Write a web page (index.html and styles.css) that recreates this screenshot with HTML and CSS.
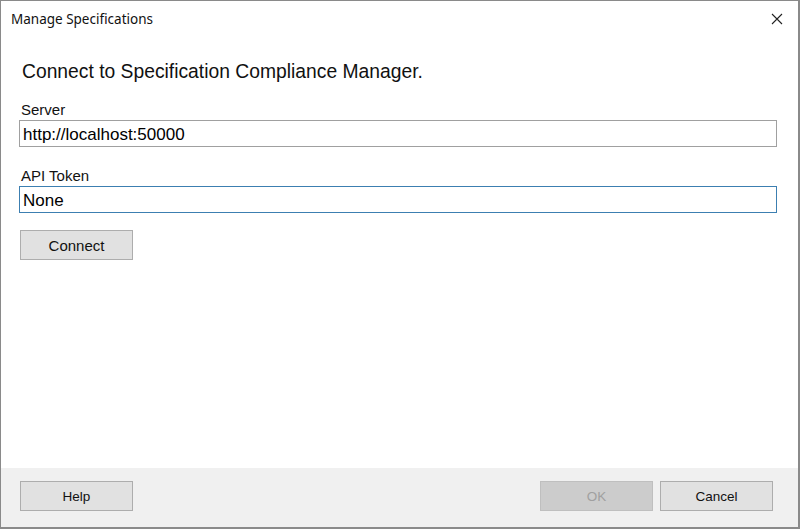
FILE: index.html
```html
<!DOCTYPE html>
<html>
<head>
<meta charset="utf-8">
<link rel="stylesheet" href="styles.css">
</head>
<body>
<div class="window">
  <div class="titlebar">
    <span class="title">Manage Specifications</span>
    <span class="close" aria-label="Close">
      <svg width="12" height="12" viewBox="0 0 12 12"><path d="M1 1L11 11M11 1L1 11" stroke="#222" stroke-width="1.1" fill="none"/></svg>
    </span>
  </div>
  <div class="content">
    <h1 class="heading">Connect to Specification Compliance Manager.</h1>
    <div class="field first">
      <label class="label">Server</label>
      <div class="input">http://localhost:50000</div>
    </div>
    <div class="field">
      <label class="label">API Token</label>
      <div class="input focused">None</div>
    </div>
    <button class="btn connect">Connect</button>
  </div>
  <div class="footer">
    <button class="btn">Help</button>
    <div class="spacer"></div>
    <button class="btn disabled">OK</button>
    <button class="btn">Cancel</button>
  </div>
</div>
</body>
</html>
```

FILE: styles.css
```css
html, body {
  margin: 0;
  padding: 0;
  background: #ffffff;
}
.window {
  width: 800px;
  height: 529px;
  box-sizing: border-box;
  border: 1px solid #8a8a8a;
  border-right-width: 2px;
  border-bottom-width: 2px;
  display: flex;
  flex-direction: column;
  background: #fff;
  font-family: "Liberation Sans", Arial, sans-serif;
  color: #000;
}
.titlebar {
  height: 35px;
  display: flex;
  align-items: center;
  justify-content: space-between;
  padding: 0 15px 0 10px;
}
.title {
  font-family: "Noto Sans", "Open Sans", sans-serif;
  font-size: 13.5px;
  color: #111;
}
.close {
  display: flex;
  align-items: center;
  padding-top: 1px;
}
.content {
  flex: 1;
  padding: 0 21px 0 18px;
  display: flex;
  flex-direction: column;
  align-items: flex-start;
}
.heading {
  font-size: 19.3px;
  font-weight: normal;
  margin: 25px 0 0 3px;
  line-height: 22px;
  color: #111;
}
.field {
  align-self: stretch;
  display: flex;
  flex-direction: column;
}
.field.first { margin-top: 18px; }
.field + .field { margin-top: 20px; }
.label {
  font-size: 15px;
  line-height: 17px;
  margin-left: 2px;
  color: #111;
  margin-bottom: 2px;
}
.input {
  height: 27px;
  box-sizing: border-box;
  border: 1px solid #a0a0a0;
  padding: 3px 3px 0 3px;
  font-size: 17px;
  line-height: 22px;
  color: #000;
}
.input.focused {
  border-color: #3c7fb1;
}
.btn {
  width: 113px;
  height: 30px;
  box-sizing: border-box;
  border: 1px solid #adadad;
  background: #e1e1e1;
  font-family: "Liberation Sans", Arial, sans-serif;
  font-size: 13.5px;
  color: #111;
  padding: 0;
}
.btn.connect {
  margin: 17px 0 0 1px;
  font-size: 15px;
}
.btn.disabled {
  background: #cccccc;
  border-color: #bfbfbf;
  color: #a0a0a0;
}
.footer {
  height: 59px;
  box-sizing: border-box;
  background: #f0f0f0;
  display: flex;
  align-items: flex-start;
  padding: 13px 25px 0 19px;
  gap: 7px;
}
.spacer { flex: 1; }
```
